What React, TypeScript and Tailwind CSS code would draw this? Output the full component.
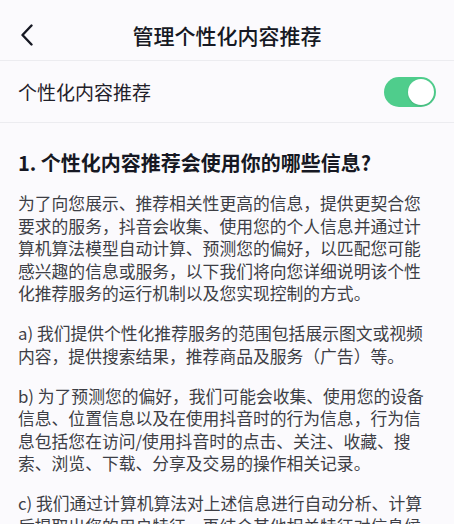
import React from "react";

const FONT = { fontFamily: '"Noto Sans CJK SC", "Noto Sans", sans-serif' };

const PARAGRAPHS = [
  "为了向您展示、推荐相关性更高的信息，提供更契合您要求的服务，抖音会收集、使用您的个人信息并通过计算机算法模型自动计算、预测您的偏好，以匹配您可能感兴趣的信息或服务，以下我们将向您详细说明该个性化推荐服务的运行机制以及您实现控制的方式。",
  "a) 我们提供个性化推荐服务的范围包括展示图文或视频内容，提供搜索结果，推荐商品及服务（广告）等。",
  "b) 为了预测您的偏好，我们可能会收集、使用您的设备信息、位置信息以及在使用抖音时的行为信息，行为信息包括您在访问/使用抖音时的点击、关注、收藏、搜索、浏览、下载、分享及交易的操作相关记录。",
  "c) 我们通过计算机算法对上述信息进行自动分析、计算后提取出您的用户特征，再结合其他相关特征对信息候选池进行筛选。",
];

function BackIcon() {
  return (
    <svg width="14" height="22" viewBox="0 0 14 22" fill="none">
      <path d="M11.5 1.5L2.5 11L11.5 20.5" stroke="#161823" strokeWidth="2.4" strokeLinecap="round" strokeLinejoin="round" />
    </svg>
  );
}

function Toggle({ on }: { on: boolean }) {
  return (
    <div className={`w-[52px] h-[30px] rounded-full p-[2px] flex items-center ${on ? "bg-[#4fcd8c] justify-end" : "bg-[#e3e3e6] justify-start"}`}>
      <div className="w-[26px] h-[26px] rounded-full bg-white shadow-[0_1px_2px_rgba(0,0,0,0.12)]" />
    </div>
  );
}

export default function App() {
  return (
    <div className="w-[454px] h-[524px] overflow-hidden bg-[#fbfafd] text-[#161823]" style={FONT}>
      <header className="relative h-[61px] pt-[10px] flex items-center justify-center border-b border-[#ececf0]">
        <div className="absolute left-[20px] top-[24px]">
          <BackIcon />
        </div>
        <h1 className="text-[21px] font-medium leading-[28px]">管理个性化内容推荐</h1>
      </header>

      <div className="h-[62px] px-[18px] flex items-center justify-between border-b border-[#ececf0]">
        <span className="text-[19px] leading-[26px] text-[#1f2029]">个性化内容推荐</span>
        <Toggle on />
      </div>

      <section className="px-[18px] pt-[26px]">
        <h2 className="text-[20px] font-semibold leading-[28px] text-[#161823]">1. 个性化内容推荐会使用你的哪些信息?</h2>
        <div className="mt-[15px] flex flex-col gap-[17.5px]">
          {PARAGRAPHS.map((p, i) => (
            <p key={i} className="text-[16.8px] leading-[22.5px] text-[#3d3e45]">
              {p}
            </p>
          ))}
        </div>
      </section>
    </div>
  );
}
